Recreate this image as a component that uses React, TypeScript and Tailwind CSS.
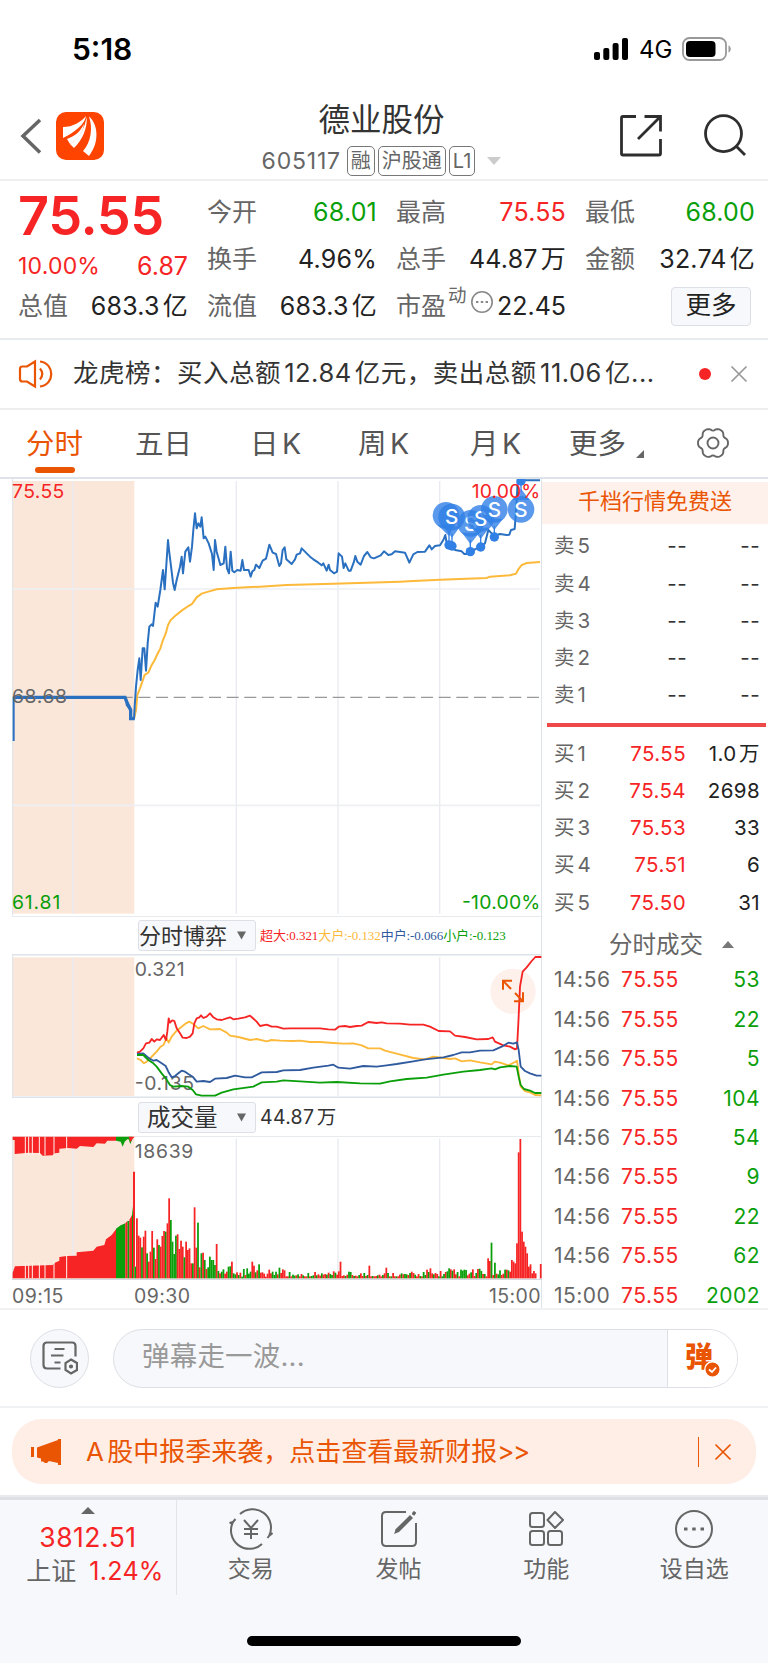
import type { ReactNode } from 'react';

// Chart drawings use 3 units per CSS pixel
const pricePath =
    '41,993 41,862 375,862 380,872 380,885 388,895 392,900 392,926 402,926 404,890 408,830 413,780 418,745 422,810 428,715 433,715 438,782 443,700 448,650 455,643 459,648 467,578 473,590 481,540 489,480 494,538 498,480 504,390 507,420 512,460 519,518 524,540 530,510 540,470 545,440 549,490 556,425 565,412 570,455 576,410 580,360 585,310 590,355 595,340 601,350 605,322 611,385 616,380 626,400 636,432 641,480 645,390 650,425 657,450 661,465 671,460 676,410 681,475 687,490 692,425 697,482 703,487 712,480 722,482 727,450 732,480 746,480 752,500 757,484 763,480 768,464 778,474 788,452 798,446 808,404 818,428 828,432 838,468 843,460 848,420 854,412 859,448 875,462 885,448 890,434 900,430 905,415 920,430 930,440 940,448 955,458 965,466 970,460 980,482 986,464 990,480 1002,490 1011,485 1016,430 1026,440 1031,474 1036,460 1046,482 1052,482 1062,455 1066,438 1072,455 1082,464 1092,438 1102,426 1112,442 1122,445 1142,436 1152,424 1165,435 1175,433 1185,424 1200,426 1215,428 1228,458 1240,433 1252,426 1275,425 1288,406 1295,418 1305,408 1320,406 1330,390 1336,375 1340,400 1348,410 1365,420 1385,424 1393,432 1400,432 1410,428 1425,418 1440,410 1455,400 1465,360 1475,370 1482,378 1500,372 1520,375 1528,374 1533,360 1544,357 1549,290 1553,215 1558,211 1620,211';
const avgPath =
    '402,926 408,900 412,855 420,835 427,815 434,795 445,788 455,765 463,752 471,735 481,715 489,690 498,668 504,645 512,630 525,618 545,602 565,588 576,582 590,562 605,551 625,545 650,538 700,534 780,530 860,525 1000,521 1100,518 1200,515 1240,513 1320,509 1460,504 1470,500 1530,496 1548,491 1555,478 1565,465 1580,459 1620,456';

const flows = [
    { color: '#fcb93a', points: '411,505 422,510 432,520 440,515 450,505 460,495 470,485 480,472 490,465 500,445 506,458 515,440 530,422 545,410 558,400 568,395 580,402 595,415 610,408 630,418 660,417 680,428 690,437 715,441 750,450 770,447 800,454 815,450 840,452 880,453 900,452 930,456 960,456 1000,459 1030,461 1060,460 1085,466 1105,475 1140,475 1155,482 1190,491 1240,504 1275,508 1300,500 1330,504 1350,507 1365,505 1385,514 1410,511 1440,517 1475,523 1484,515 1500,518 1525,526 1545,516 1551,512 1556,550 1562,590 1575,603 1590,607 1605,615 1624,616' },
    { color: '#f62424', points: '411,488 420,485 430,475 438,460 448,458 455,447 463,455 470,448 480,450 491,435 498,450 502,425 506,385 510,398 517,391 523,393 530,415 540,430 548,443 560,444 570,440 578,430 583,400 590,385 598,382 603,376 610,384 620,380 630,370 640,382 650,388 665,390 680,385 690,382 700,388 715,386 735,382 750,377 758,384 770,395 780,408 800,404 815,410 830,410 850,416 870,415 900,415 930,415 960,415 985,418 1005,419 1016,410 1035,408 1050,411 1070,408 1085,407 1105,396 1130,399 1145,397 1160,400 1200,401 1230,404 1270,404 1290,410 1316,423 1350,424 1365,437 1395,441 1430,448 1465,447 1478,442 1485,455 1510,466 1530,470 1545,478 1551,475 1555,400 1560,290 1568,245 1580,232 1595,213 1606,201 1624,201' },
    { color: '#2f5a9e', points: '411,492 430,490 445,503 460,512 470,510 485,520 497,528 505,545 515,562 525,558 535,550 545,542 555,545 565,552 578,560 590,575 610,573 630,576 645,566 680,564 705,557 735,562 755,562 785,547 830,546 850,541 900,540 940,533 985,527 1000,524 1015,533 1050,536 1090,528 1130,530 1160,526 1190,522 1240,514 1275,508 1330,502 1360,495 1385,487 1410,487 1440,482 1480,481 1505,470 1525,458 1540,461 1551,457 1556,480 1562,530 1575,543 1590,550 1610,557 1624,557' },
    { color: '#0a9f0a', points: '411,495 430,495 445,510 460,520 470,530 485,550 497,565 510,585 520,590 545,588 565,590 578,600 588,613 605,617 645,617 665,608 700,598 760,590 785,577 830,575 850,571 900,574 960,578 1010,576 1080,580 1140,581 1170,574 1220,567 1280,563 1330,554 1390,545 1440,540 1475,535 1485,538 1500,532 1530,528 1550,530 1556,560 1562,585 1572,597 1590,602 1605,609 1624,609' },
];

// Minute volume bars, r = up, g = down
const openBars =
    '35g 180r 128r 122r 93g 125r 143r 75g 50r 80r 142r 92g 58r 117r 100g 95r 127r 142r 140g 165r 240r 175g 110g 73g 128g 132r 88r 113r 95r 63g 110r 85r 90r 45r 45g 213r 92r 167g 33r 75g 77r 55g 28r 33g 65g 55g 55g 40g 103r 22g 15r 20g 27g 14r 20r 35g 36g 50r 15g 12g 18r 10g 17r 5g 28g 10r 30g 14g 20g 50r 38r 18g 24r 42g 17r 18r 14r 5r 14r 26r 15r 20g 10g 20g 12r 32g 16r 27r 24r 6r';
const closeBars =
    '60r 52r 107g 10r 47g 14r 12g 24g 10r 14r 26g 26r 24g 20r 55r 50r 45r 105r 378r 418r 140r 110r 95r 75r 35r 42r 15r 22r 15r 0r 0r 43r';
const quietBars = Array.from({ length: 118 }, (_, i) => {
    const peaks: Record<number, string> = { 31: '50r', 48: '38r', 58: '32r', 84: '30r', 95: '30g', 104: '26g', 114: '22g' };
    const n = Math.abs(Math.sin(i * 12.9898) * 43758.5453) % 1;
    return peaks[i] ?? `${Math.round(6 + n * n * (i > 78 ? 24 : 15))}${(i * 7) % 11 < 6 ? 'r' : 'g'}`;
});
const bars = [...openBars.split(' '), ...quietBars, ...closeBars.split(' ')];

const pins = [
    { x: 1338, y: 316, dx: 1347, dy: 405, ghost: true },
    { x: 1412, y: 340, dx: 1411, dy: 425 },
    { x: 1442, y: 325, dx: 1442, dy: 411 },
    { x: 1355, y: 321, dx: 1356, dy: 408 },
    { x: 1483, y: 298, dx: 1483, dy: 381 },
    { x: 1563, y: 298, dx: 1563, dy: 213 },
];

// Six-lobed outline of the settings icon
const gearPoints = Array.from({ length: 72 }, (_, i) => {
    const a = (i * Math.PI) / 36;
    const r = 14 + 1.3 * Math.cos(6 * a) - 0.3 * Math.cos(12 * a);
    return `${(r * Math.cos(a)).toFixed(2)},${(r * Math.sin(a)).toFixed(2)}`;
}).join(' ');

const sells = ['5', '4', '3', '2', '1'];
const buys = [
    ['1', '75.55', '1.0万'],
    ['2', '75.54', '2698'],
    ['3', '75.53', '33'],
    ['4', '75.51', '6'],
    ['5', '75.50', '31'],
];
const trades = [
    ['14:56', '53'],
    ['14:56', '22'],
    ['14:56', '5'],
    ['14:56', '104'],
    ['14:56', '54'],
    ['14:56', '9'],
    ['14:56', '22'],
    ['14:56', '62'],
    ['15:00', '2002'],
];

const StatusBar = () => (
    <div className="flex h-[95px] items-center justify-between pl-[72px] pr-[36px] pt-[3px]">
        <div className="text-[30px] font-semibold leading-none text-black">5:18</div>
        <div className="flex items-center">
            <svg width="35" height="23" viewBox="0 0 35 23" className="mr-[10px]">
                <rect x="0" y="14" width="6" height="8" rx="2" />
                <rect x="9.3" y="10" width="6" height="12" rx="2" />
                <rect x="18.6" y="5" width="6" height="17" rx="2" />
                <rect x="28" y="0" width="6" height="22" rx="2" />
            </svg>
            <div className="mr-[10px] mt-[2px] w-[33px] text-[24px] leading-none text-black">4G</div>
            <svg width="50" height="24" viewBox="0 0 50 24">
                <rect x="1" y="1" width="43" height="22" rx="6.5" fill="none" stroke="#999" strokeWidth="1.8" />
                <rect x="4" y="4" width="29.500" height="16" rx="4" />
                <path d="M46.500 8.500c3 1.200 3 5.800 0 7z" fill="#999" />
            </svg>
        </div>
    </div>
);

const Tag = ({ children }: { children: ReactNode }) => (
    <span className="flex h-[30px] items-center rounded-[5px] border-[1.5px] border-[#777] px-[3px] text-[20px] leading-none">{children}</span>
);

const Header = () => (
    <div className="flex h-[86px] items-start justify-between border-b-2 border-[#eee] pl-[20px] pr-[20px]">
        <div className="flex items-center pt-[17px]">
            <svg width="24" height="36" viewBox="0 0 24 36" className="mr-[12px]">
                <path d="M20 2L3 18L20 34.500" fill="none" stroke="#666" strokeWidth="3.500" />
            </svg>
            <svg width="48" height="48" viewBox="0 0 48 48">
                <rect width="48" height="48" rx="10" fill="#ff4400" />
                <path d="M7 15C17 15 25 10 30 4C29 12 19 20 7 26Z" fill="#fff" />
                <path d="M30.500 5C32 15 26 29 18 36L14 32C23 27 29 16 30.500 5Z" fill="#fff" />
                <path d="M33 4.500C42 12 44 30 33 44L27 39C35 30 37 16 33 4.500Z" fill="#fff" />
                <path d="M28 12C24 20 19 24 11 27L14 32C22 28 27 20 28 12Z" fill="#fff" />
            </svg>
        </div>
        <div className="ml-[41px] flex flex-col items-center">
            <div className="mt-[8px] text-[31.500px] leading-[34px] text-[#333]">德业股份</div>
            <div className="mt-[9px] flex items-center gap-[3px] text-[#666]">
                <span className="mr-[3px] text-[23px] leading-none tracking-[0.8px]">605117</span>
                <Tag>融</Tag>
                <Tag>沪股通</Tag>
                <Tag>L1</Tag>
                <svg width="14" height="8" viewBox="0 0 14 8" className="ml-[9px]">
                    <path d="M0 0H14L7 8Z" fill="#ccc" />
                </svg>
            </div>
        </div>
        <div className="flex pt-[18px]">
            <svg width="46" height="46" viewBox="0 0 46 46" className="mr-[38px]" fill="none" stroke="#2e2e2e" strokeWidth="2.800">
                <path d="M18 3.500H5Q3.500 3.500 3.500 5V40.500Q3.500 42 5 42H41Q42.500 42 42.500 40.500V26" />
                <path d="M26.500 3.500H42.500V18.500M42 4L20 26" />
            </svg>
            <svg width="46" height="46" viewBox="0 0 46 46" fill="none" stroke="#2e2e2e" strokeWidth="2.800">
                <circle cx="21.500" cy="20.600" r="18" />
                <path d="M34 33L43 42" />
            </svg>
        </div>
    </div>
);

interface StatProps {
    label: string;
    value: string;
    color?: string;
}

const Stat = ({ label, value, color = 'text-[#222]' }: StatProps) => (
    <div className="flex h-[47px] items-center justify-between text-[25px]">
        <span className="text-[#666]">{label}</span>
        <span className={`tracking-[0.2px] ${color}`}>{value}</span>
    </div>
);

const Quote = () => (
    <div className="flex h-[159px] gap-[19px] border-b-2 border-[#e8ebee] pl-[18px] pr-[13px] pt-[8px]">
        <div className="w-[170px]">
            <div className="h-[54px] text-[54px] font-semibold leading-[54px] tracking-[-0.4px] text-[#f62424]">75.55</div>
            <div className="flex h-[40px] items-center justify-between pt-[6px] text-[23px] text-[#f62424]">
                <span className="tracking-[0.2px]">10.00%</span>
                <span className="pt-[2px] text-[25px]">6.87</span>
            </div>
            <Stat label="总值" value="683.3亿" />
        </div>
        <div className="w-[170px]">
            <Stat label="今开" value="68.01" color="text-[#0a9f0a]" />
            <Stat label="换手" value="4.96%" />
            <Stat label="流值" value="683.3亿" />
        </div>
        <div className="w-[170px]">
            <Stat label="最高" value="75.55" color="text-[#f62424]" />
            <Stat label="总手" value="44.87万" />
            <div className="flex h-[47px] items-center text-[25px] text-[#666]">
                市盈
                <span className="mb-[22px] ml-[2px] text-[18.500px] leading-none">动</span>
                <svg width="24" height="24" viewBox="0 0 24 24" className="mb-[9px] ml-[3px]">
                    <circle cx="12" cy="12" r="10.200" fill="none" stroke="#888" strokeWidth="1.600" />
                    <path d="M6 11h2.400v2H6zM10.800 11h2.400v2h-2.400zM15.600 11h2.400v2h-2.400z" fill="#888" />
                </svg>
                <span className="ml-auto text-[#222]">22.45</span>
            </div>
        </div>
        <div className="w-[170px]">
            <Stat label="最低" value="68.00" color="text-[#0a9f0a]" />
            <Stat label="金额" value="32.74亿" />
            <div className="flex h-[47px] items-center justify-end pr-[4px]">
                <button className="h-[39px] w-[80px] rounded-[4px] border-[1.5px] border-[#dcdfe5] bg-[#f7f8fb] pb-[3px] text-[25.500px] leading-none text-[#222]">更多</button>
            </div>
        </div>
    </div>
);

const Notice = () => (
    <div className="flex h-[70px] items-center border-b-2 border-[#eee] pl-[18px] pr-[20px]">
        <svg width="36" height="30" viewBox="0 0 36 30" fill="none" stroke="#ea5504" strokeWidth="2.200">
            <path d="M17 2.500V27.500L9 22.500H4.500Q2 22.500 2 20V10Q2 7.500 4.500 7.500H9Z" />
            <path d="M22 9.500Q26.500 15 22 20.500M22 2.500C37 4 37 26 22 27.500" />
        </svg>
        <div className="ml-[19px] flex-1 whitespace-nowrap pb-px text-[25.500px] tracking-[0.5px] text-[#333]">龙虎榜：买入总额12.84亿元，卖出总额11.06亿...</div>
        <div className="mr-[19px] size-[12px] rounded-full bg-[#f62424]" />
        <svg width="18" height="18" viewBox="0 0 18 18">
            <path d="M1.500 1.500L16.500 16.500M16.500 1.500L1.500 16.500" stroke="#999" strokeWidth="1.700" />
        </svg>
    </div>
);

const Tabs = () => (
    <div className="flex h-[69px] border-b-2 border-[#dde3e8] text-[28.500px] leading-[68px] text-[#555]">
        <div className="relative ml-[26px] w-[109px] text-[#ea5504]">
            分时
            <span className="absolute bottom-[4px] left-[9px] h-[6px] w-[40px] rounded-full bg-[#ea5504]" />
        </div>
        <div className="w-[115px]">五日</div>
        <div className="w-[108px]">日K</div>
        <div className="w-[112px]">周K</div>
        <div className="w-[99px]">月K</div>
        <div className="flex w-[127px]">
            更多
            <svg width="9" height="9" viewBox="0 0 9 9" className="ml-[10px] mt-[40px]">
                <path d="M8 0V8H0Z" fill="#666" />
            </svg>
        </div>
        <svg width="34" height="34" viewBox="-17 -17 34 34" className="mt-[16px]" fill="none" stroke="#666" strokeWidth="1.900">
            <polygon points={gearPoints} strokeLinejoin="round" />
            <circle r="5.500" />
        </svg>
    </div>
);

const Grid = ({ top, bottom }: { top: number; bottom: number }) => (
    <>
        <rect x="38" y={top} width="365" height={bottom - top} fill="#fbe7da" />
        <path d={`M219 ${top}V${bottom}M709 ${top}V${bottom}M1014 ${top}V${bottom}M1319 ${top}V${bottom}`} stroke="#e9ebf1" strokeWidth="4" />
        <path d={`M38 ${top - 6}V${bottom + 6}`} stroke="#dde3e8" strokeWidth="3" />
    </>
);

const PriceChart = () => (
    <svg width="530" height="437" viewBox="36 207 1590 1311" className="block" fontSize="58">
        <Grid top={213} bottom={1511} />
        <path d="M38 537H1620M38 1186H1620" stroke="#edeff4" strokeWidth="5" />
        <path d="M362 862H1620" stroke="#999" strokeWidth="4" strokeDasharray="36 17" />
        <polyline points={avgPath} fill="none" stroke="#fcb93a" strokeWidth="6" />
        <polyline points={pricePath} fill="none" stroke="#2a70c0" strokeWidth="6" strokeLinejoin="round" />
        <path d="M41 862H375L382 880L392 900V926H404" fill="none" stroke="#2a70c0" strokeWidth="10" />
        {pins.map((p) => {
            const dir = Math.sign(p.dy - p.y);
            return (
                <g key={p.x}>
                    <path d={`M${p.x - 26} ${p.y + dir * 28}L${p.dx} ${p.y + dir * 62}L${p.x + 26} ${p.y + dir * 28}Z`} fill="#3180e6" fillOpacity="0.8" />
                    <circle cx={p.x} cy={p.y} r="40" fill="#3180e6" fillOpacity="0.8" />
                    <path d={`M${p.dx} ${p.y + dir * 50}V${p.dy}`} stroke="#3180e6" strokeWidth="4" />
                    <circle cx={p.dx} cy={p.dy} r="14" fill="#3180e6" />
                    {!p.ghost && (
                        <text x={p.x} y={p.y + 22} textAnchor="middle" fontSize="62" fontWeight="500" fill="#fff">
                            S
                        </text>
                    )}
                </g>
            );
        })}
        <text x="36" y="264" fill="#f62424" textLength="157">75.55</text>
        <text x="1621" y="264" fill="#f62424" textAnchor="end" textLength="206">10.00%</text>
        <text x="36" y="880" fill="#666" textLength="165">68.68</text>
        <text x="36" y="1497" fill="#0a9f0a" textLength="145">61.81</text>
        <text x="1621" y="1497" fill="#0a9f0a" textAnchor="end" textLength="235">-10.00%</text>
    </svg>
);

const Selector = ({ children }: { children: ReactNode }) => (
    <div className="flex h-[31px] w-[118px] shrink-0 items-center justify-between rounded-[3px] border-[1.5px] border-[#dcdfe5] bg-[#f7f8fb] pr-[9px] text-[#333]">
        {children}
        <svg width="9" height="9" viewBox="0 0 10 9">
            <path d="M0 0H10L5 9Z" fill="#666" />
        </svg>
    </div>
);

const FlowChart = () => (
    <svg width="530" height="144" viewBox="36 192 1590 432" className="block" fontSize="58">
        <Grid top={202} bottom={618} />
        <path d="M36 194H1626M36 622H1626" stroke="#dde3e8" strokeWidth="5" />
        <text x="404" y="258" fill="#666" textLength="150">0.321</text>
        <text x="404" y="601" fill="#666" textLength="178">-0.135</text>
        <circle cx="1539" cy="304" r="68" fill="#fef0ea" />
        {flows.map((f) => (
            <polyline key={f.color} points={f.points} fill="none" stroke={f.color} strokeWidth="5.500" strokeLinejoin="round" />
        ))}
        <path d="M1509 299V272H1536M1509 272L1533 297M1542 334H1569V307M1569 334L1545 309" fill="none" stroke="#ea5504" strokeWidth="6" />
    </svg>
);

const VolumeChart = () => (
    <svg width="530" height="144" viewBox="36 738 1590 432" className="block" fontSize="58">
        <Grid top={746} bottom={1166} />
        <path d="M36 739H1626" stroke="#e8ebee" strokeWidth="4" />
        <path d="M36 1169H1626" stroke="#d5dae0" strokeWidth="5" />
        <rect x="38" y="740" width="365" height="10" fill="#fbe7da" />
        <path d="M38 1165V1148L45 1129L158 1125L165 1118L178 1112V1101L200 1098L230 1097V1087L280 1082L290 1070L313 1065L318 1048L335 1035L348 1018V1165Z" fill="#f62424" />
        <path d="M38 740V750H44V792L85 788L120 789L128 797L158 796L165 790L178 788V776L205 774L230 776L240 768L280 771L290 760L315 761L322 752L348 752V740Z" fill="#f62424" />
        <path d="M348 740V752L362 755L368 770L374 755L382 748H386L391 762L397 748V740Z" fill="#0a9f0a" />
        <path d="M386 740H404L398 746L391 756Z" fill="#f62424" />
        <path d="M76 740V796M86 740V796M97 740V796M118 740V796M135 740V796M162 740V796M200 740V780M76 1118V1165M86 1118V1165M97 1118V1165M118 1118V1165M135 1118V1165M162 1112V1165M200 1094V1165" stroke="#fff4ee" strokeWidth="3" />
        <path d="M348 1165V1016L362 1006L376 1000V1165ZM382 1165V993H388V1165Z" fill="#0a9f0a" />
        <path d="M376 1165V1000L382 993V1165ZM388 1165V990L396 975V1165Z" fill="#f62424" />
        <path d="M396 1165V975L400 940V1165Z" fill="#0a9f0a" />
        <path d="M399 845H405V1130H403V1165H399Z" fill="#f62424" />
        {bars.map((b, i) => {
            const h = parseInt(b);
            return <rect key={i} x={403 + i * 5.09} y={1165 - h} width="5.300" height={h} fill={b.endsWith('g') ? '#0a9f0a' : '#f62424'} />;
        })}
        <text x="404" y="804" fill="#666" textLength="176">18639</text>
    </svg>
);

const Charts = () => (
    <div className="ml-[12px] w-[530px] border-r-[1.5px] border-[#dde3e8]">
        <PriceChart />
        <div className="flex h-[38px] items-center gap-[4px] border-t-[1.5px] border-[#e8ebee] pl-[126px]">
            <Selector>
                <span className="text-[22px] leading-none">分时博弈</span>
            </Selector>
            <div className="whitespace-nowrap font-['Liberation_Serif','Noto_Sans_CJK_SC',serif] text-[13px] tracking-[-0.08px] [text-autospace:no-autospace]">
                <span className="text-[#f62424]">超大:0.321</span>
                <span className="text-[#fcb93a]">大户:-0.132</span>
                <span className="text-[#2f5a9e]">中户:-0.066</span>
                <span className="text-[#0a9f0a]">小户:-0.123</span>
            </div>
        </div>
        <FlowChart />
        <div className="flex h-[38px] items-center gap-[4px] pl-[126px] pt-px">
            <Selector>
                <span className="pl-[8px] text-[23.500px] leading-none">成交量</span>
            </Selector>
            <span className="text-[19.500px] tracking-[0.3px] text-[#333]">44.87万</span>
        </div>
        <VolumeChart />
        <div className="flex h-[28px] items-center pt-[5px] text-[19.500px] tracking-[0.4px] text-[#666]">
            <span className="w-[122px]">09:15</span>
            <span className="flex-1">09:30</span>
            <span>15:00</span>
        </div>
    </div>
);

const OrderBook = () => (
    <div className="w-[226px] text-[20.500px] tracking-[0.4px]">
        <div className="mt-[3px] flex h-[42px] items-center justify-center bg-[#fef0ea] pb-[3px] text-[22px] tracking-normal text-[#ea5504]">千档行情免费送</div>
        <div className="mt-[4px] pl-[12px] pr-[8px]">
            {sells.map((n) => (
                <div key={n} className="flex h-[37.250px] items-center">
                    <span className="w-[60px] text-[#666]">卖{n}</span>
                    <span className="w-[73px] text-right text-[#333]">--</span>
                    <span className="flex-1 text-right text-[#333]">--</span>
                </div>
            ))}
        </div>
        <div className="ml-[5px] mr-[2px] mt-[9px] h-[4px] bg-[#ee4848]" />
        <div className="mt-[8px] pl-[12px] pr-[8px]">
            {buys.map(([n, price, amount]) => (
                <div key={n} className="flex h-[37.250px] items-center">
                    <span className="w-[50px] text-[#666]">买{n}</span>
                    <span className="w-[82px] text-right text-[#f62424]">{price}</span>
                    <span className="flex-1 text-right text-[#222]">{amount}</span>
                </div>
            ))}
        </div>
        <div className="flex h-[39px] items-center pl-[67px] pt-[7px] text-[23.500px] tracking-normal text-[#666]">
            分时成交
            <svg width="12" height="7" viewBox="0 0 12 7" className="ml-[19px]">
                <path d="M0 7H12L6 0Z" fill="#777" />
            </svg>
        </div>
        <div className="pl-[12px] pr-[8px]">
            {trades.map(([time, amount], i) => (
                <div key={i} className="flex h-[39.400px] items-center text-[21px] tracking-[0.5px]">
                    <span className="w-[67px] text-[#666]">{time}</span>
                    <span className="text-[#f62424]">75.55</span>
                    <span className="flex-1 text-right text-[#0a9f0a]">{amount}</span>
                </div>
            ))}
        </div>
    </div>
);

const Barrage = () => (
    <div className="flex h-[100px] items-center border-y-2 border-[#f0f1f3] pl-[30px]">
        <div className="flex size-[59px] items-center justify-center rounded-full border-[1.5px] border-[#dcdfe5] bg-[#f7f8fb]">
            <svg width="36" height="34" viewBox="0 0 36 34" fill="none" stroke="#666" strokeWidth="2.200">
                <path d="M18.500 27.500H5Q1.500 27.500 1.500 24V5Q1.500 1.500 5 1.500H30Q33.500 1.500 33.500 5V15.500" />
                <path d="M12.500 8H22.500M9 14.500H21.500M12.500 21.500H18.500" />
                <path d="M29 18.500L35 22V29L29 32.500L23.500 29V22Z" />
                <circle cx="29" cy="25.500" r="1" />
            </svg>
        </div>
        <div className="ml-[24px] flex h-[59px] w-[625px] overflow-hidden rounded-full border-[1.5px] border-[#dcdfe5] bg-[#f7f8fb]">
            <div className="flex-1 pl-[28px] text-[27.500px] leading-[52px] tracking-[0.2px] text-[#999]">弹幕走一波...</div>
            <div className="relative w-[70px] border-l-[1.5px] border-[#dcdfe5] bg-white pl-[17px] text-[28px] font-black leading-[54px] text-[#ea5504]">
                弹
                <svg width="17" height="17" viewBox="0 0 17 17" className="absolute left-[36px] top-[31px]">
                    <circle cx="8.500" cy="8.500" r="7.700" fill="#ea5504" stroke="#fff" strokeWidth="1.400" />
                    <path d="M5 8.500L8 11L12 6.500" fill="none" stroke="#fff" strokeWidth="1.800" />
                </svg>
            </div>
        </div>
    </div>
);

const Banner = () => (
    <div className="h-[89px] border-b-2 border-[#e8eaed] px-[12px] pt-[11px]">
        <div className="flex h-[65px] items-center rounded-[30px] bg-[#feeee6] pl-[19px] pr-[24px] text-[#ea5504]">
            <svg width="31" height="28" viewBox="0 0 31 28" fill="currentColor">
                <path d="M0 9H3V19H0ZM6 9.500L27 2V1H30V27H27V25L18 23L16 25H14L12 23.500H10V20.500L6 19.500Z" />
            </svg>
            <div className="ml-[24px] flex-1 text-[26px]">
                A股中报季来袭，点击查看最新财报<span className="tracking-[-1.500px]">&gt;&gt;</span>
            </div>
            <div className="mr-[15px] h-[30px] w-[1.500px] bg-[#ea5504]" />
            <svg width="18" height="18" viewBox="0 0 18 18">
                <path d="M1.500 1.500L16.500 16.500M16.500 1.500L1.500 16.500" stroke="#ea5504" strokeWidth="1.700" />
            </svg>
        </div>
    </div>
);

const NavItem = ({ label, children }: { label: string; children: ReactNode }) => (
    <div className="flex w-[147.800px] flex-col items-center pt-[7px] text-[23px] text-[#666]">
        <svg width="44" height="44" viewBox="-22 -22 44 44" fill="none" stroke="#666" strokeWidth="2">
            {children}
        </svg>
        <span className="mt-[2px] leading-[32px]">{label}</span>
    </div>
);

const BottomNav = () => (
    <div className="h-[166px] border-t-[3px] border-[#dee0e5] bg-[#f7f8fb]">
        <div className="flex h-[95px]">
            <div className="flex w-[177px] flex-col items-center border-r-[1.5px] border-[#e2e4e9] pt-[7px]">
                <svg width="14" height="7" viewBox="0 0 14 7">
                    <path d="M0 7H14L7 0Z" fill="#666" />
                </svg>
                <div className="mt-[6px] text-[26.500px] leading-[34px] tracking-[0.5px] text-[#f62424]">3812.51</div>
                <div className="flex gap-[13px] pl-[14px] text-[25px] leading-[34px]">
                    <span className="text-[#666]">上证</span>
                    <span className="tracking-[0.3px] text-[#f62424]">1.24%</span>
                </div>
            </div>
            <NavItem label="交易">
                <path d="M-11 -15A18.500 18.500 0 0 1 18 7M18 7L21.500 4M18 7L16.500 9M11 15A18.500 18.500 0 0 1 -18 -7M-18 -7L-21.500 -6M-18 -7L-15.500 -10" />
                <path d="M-7 -9L0 -1L7 -9M0 -1V10M-7 0H7M-7 5H7" />
            </NavItem>
            <NavItem label="发帖">
                <path d="M7 -17H-13Q-17 -17 -17 -13V13Q-17 17 -13 17H13Q17 17 17 13V-6" />
                <path d="M-5 5L-3 0L11 -14L14 -11L0 3ZM13 -16L15 -18L17 -16L15 -14Z" fill="#666" stroke="none" />
                <path d="M-3 2L12 -12M14 -14L16 -17" strokeWidth="3" />
            </NavItem>
            <NavItem label="功能">
                <rect x="-16" y="-16" width="14" height="14" rx="2.500" />
                <rect x="-16" y="2" width="14" height="14" rx="2.500" />
                <rect x="2" y="2" width="14" height="14" rx="2.500" />
                <path d="M9 -17L17 -9L9 -1L1.500 -9Z" strokeLinejoin="round" />
            </NavItem>
            <NavItem label="设自选">
                <circle r="18" />
                <path d="M-10 -1.500h3.500v3h-3.500zM-1.800 -1.500h3.500v3h-3.500zM6.500 -1.500h3.500v3h-3.500z" fill="#666" stroke="none" />
            </NavItem>
        </div>
        <div className="mx-auto mt-[41px] h-[10px] w-[274px] rounded-full bg-black" />
    </div>
);

const App = () => {
    return (
        <div className="h-[1663px] w-[768px] overflow-hidden bg-white font-['Inter','Noto_Sans_CJK_SC',sans-serif] [text-autospace:normal]">
            <StatusBar />
            <Header />
            <Quote />
            <Notice />
            <Tabs />
            <div className="flex h-[829px]">
                <Charts />
                <OrderBook />
            </div>
            <Barrage />
            <Banner />
            <BottomNav />
        </div>
    );
};

export default App;
